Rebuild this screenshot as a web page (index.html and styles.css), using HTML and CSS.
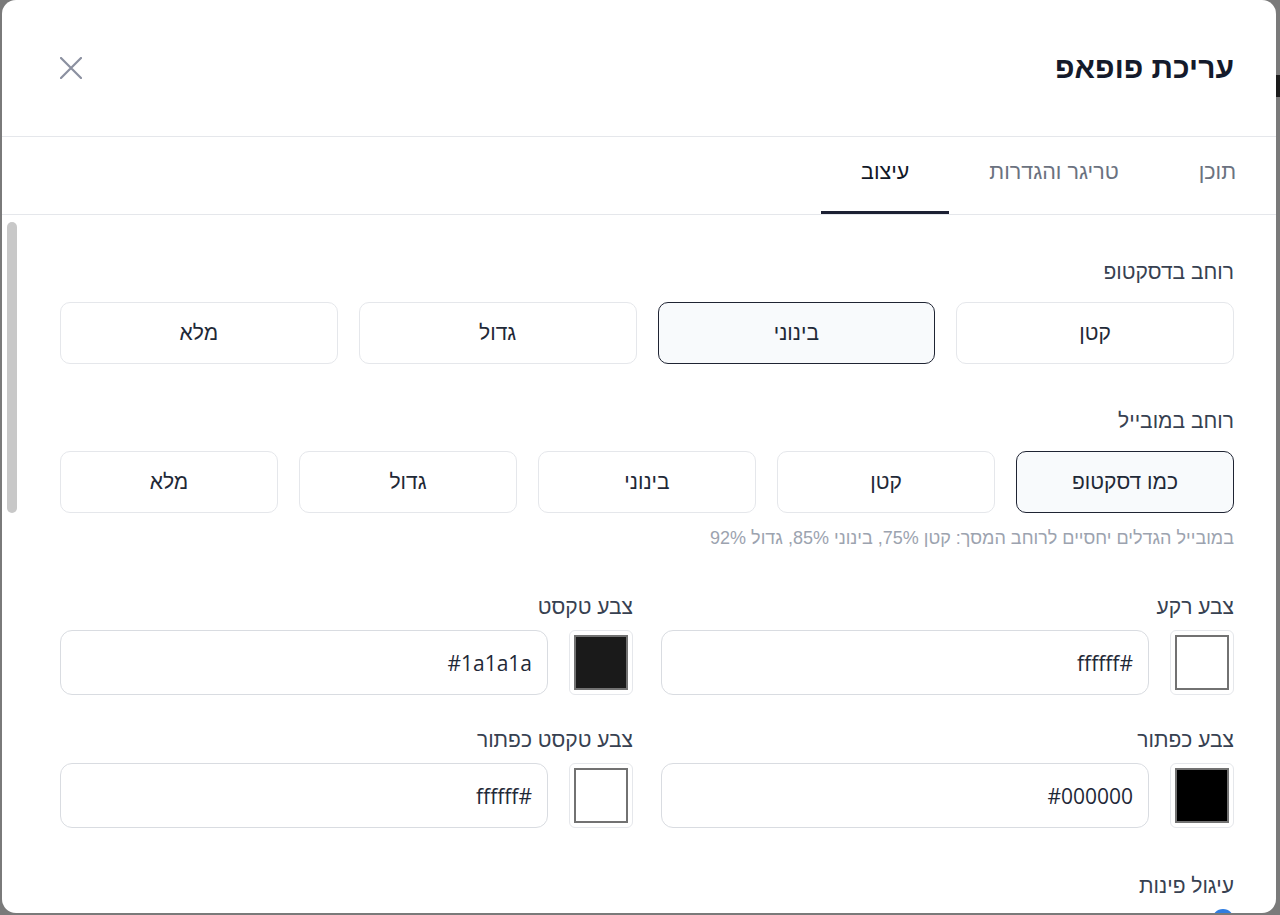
FILE: index.html
```html
<!DOCTYPE html>
<html lang="he" dir="rtl">
<head>
<meta charset="utf-8">
<title>עריכת פופאפ</title>
<link rel="stylesheet" href="styles.css">
</head>
<body>
<div class="modal">
  <div class="header">
    <h2 class="title">עריכת פופאפ</h2>
    <button class="close" aria-label="סגור">
      <svg width="22" height="22" viewBox="0 0 22 22"><path d="M1 1 L21 21 M21 1 L1 21" stroke="#8b90a0" stroke-width="2.2" stroke-linecap="round" fill="none"/></svg>
    </button>
  </div>
  <div class="tabs">
    <div class="tab">תוכן</div>
    <div class="tab">טריגר והגדרות</div>
    <div class="tab active">עיצוב</div>
  </div>
  <div class="content">
    <div class="label first">רוחב בדסקטופ</div>
    <div class="options four">
      <div class="opt">קטן</div>
      <div class="opt selected">בינוני</div>
      <div class="opt">גדול</div>
      <div class="opt">מלא</div>
    </div>
    <div class="label">רוחב במובייל</div>
    <div class="options five">
      <div class="opt selected">כמו דסקטופ</div>
      <div class="opt">קטן</div>
      <div class="opt">בינוני</div>
      <div class="opt">גדול</div>
      <div class="opt">מלא</div>
    </div>
    <div class="hint">במובייל הגדלים יחסיים לרוחב המסך: קטן 75%, בינוני 85%, גדול 92%</div>
    <div class="colors top">
      <div class="field">
        <div class="clabel">צבע רקע</div>
        <div class="crow">
          <div class="swatch"><span class="chip chip-white"></span></div>
          <div class="hex">#ffffff</div>
        </div>
      </div>
      <div class="field">
        <div class="clabel">צבע טקסט</div>
        <div class="crow">
          <div class="swatch"><span class="chip chip-dark"></span></div>
          <div class="hex">#1a1a1a</div>
        </div>
      </div>
    </div>
    <div class="colors second">
      <div class="field">
        <div class="clabel">צבע כפתור</div>
        <div class="crow">
          <div class="swatch"><span class="chip chip-black"></span></div>
          <div class="hex">#000000</div>
        </div>
      </div>
      <div class="field">
        <div class="clabel">צבע טקסט כפתור</div>
        <div class="crow">
          <div class="swatch"><span class="chip chip-white"></span></div>
          <div class="hex">#ffffff</div>
        </div>
      </div>
    </div>
    <div class="label radius">עיגול פינות</div>
    <div class="slider"><span class="thumb"></span></div>
  </div>
  <div class="scroll-thumb"></div>
</div>
</body>
</html>
```

FILE: styles.css
```css
* { box-sizing: border-box; }
html, body { margin: 0; padding: 0; }
body {
  width: 1280px;
  height: 915px;
  overflow: hidden;
  background-color: #7a7a7a;
  background-image: linear-gradient(#1b1b1b, #1b1b1b);
  background-size: 8px 22px;
  background-position: right 0 top 75px;
  background-repeat: no-repeat;
  font-family: "Liberation Sans", "Open Sans", sans-serif;
  color: #1f2937;
}
.modal {
  position: relative;
  margin: 0 4px 0 2px;
  width: 1274px;
  height: 913px;
  background: #fff;
  border-radius: 14px;
  overflow: hidden;
  display: flex;
  flex-direction: column;
  direction: rtl;
}
.header {
  height: 137px;
  flex: none;
  display: flex;
  align-items: center;
  justify-content: space-between;
  padding: 0 42px 0 58px;
  border-bottom: 1px solid #e5e7eb;
}
.title {
  margin: 0;
  font-size: 30px;
  font-weight: 700;
  color: #141a2b;
  line-height: 1;
}
.close {
  border: 0;
  background: none;
  padding: 0;
  width: 22px;
  height: 22px;
  display: flex;
  cursor: pointer;
}
.tabs {
  height: 78px;
  flex: none;
  display: flex;
  border-bottom: 1px solid #e5e7eb;
}
.tab {
  height: 77px;
  padding: 0 40px 4px;
  display: flex;
  align-items: center;
  font-size: 21.5px;
  color: #6b7280;
  border-bottom: 3px solid transparent;
}
.tab.active {
  color: #111827;
  border-bottom-color: #1c2033;
}
.content {
  flex: 1;
  padding: 0 42px 0 58px;
}
.label {
  font-size: 21px;
  line-height: 26px;
  color: #374151;
  margin-top: 44px;
  margin-bottom: 17px;
}
.options {
  display: grid;
  gap: 21px;
}
.options.four { grid-template-columns: repeat(4, 1fr); }
.options.five { grid-template-columns: repeat(5, 1fr); }
.opt {
  height: 62px;
  border: 1px solid #e5e7eb;
  border-radius: 10px;
  display: flex;
  align-items: center;
  justify-content: center;
  font-size: 21px;
  color: #1f2937;
  background: #fff;
}
.opt.selected {
  border: 1.5px solid #1f2433;
  background: #f8fafc;
}
.hint {
  margin-top: 15px;
  font-size: 18px;
  line-height: 20px;
  color: #9ca3af;
}
.colors {
  display: grid;
  grid-template-columns: 1fr 1fr;
  gap: 28px;
}
.colors.top { margin-top: 46px; }
.colors.second { margin-top: 32px; }
.clabel {
  font-size: 21px;
  line-height: 26px;
  color: #374151;
  margin-bottom: 10px;
}
.crow {
  display: flex;
  gap: 21px;
  height: 65px;
}
.swatch {
  width: 64px;
  flex: none;
  border: 1px solid #e5e7eb;
  border-radius: 6px;
  padding: 4px;
  display: flex;
}
.chip {
  flex: 1;
  border: 2px solid #727272;
}
.chip-white { background: #fff; }
.chip-dark { background: #1a1a1a; }
.chip-black { background: #000; }
.hex {
  flex: 1;
  border: 1.5px solid #d9dce1;
  border-radius: 12px;
  display: flex;
  align-items: center;
  padding: 0 15px;
  font-family: "Open Sans", sans-serif;
  font-size: 21px;
  color: #1f2937;
}
.label.radius {
  margin-top: 45px;
  margin-bottom: 10px;
}
.slider {
  height: 24px;
  display: flex;
}
.thumb {
  width: 22px;
  height: 22px;
  border-radius: 50%;
  background: #2f7de1;
}
.scroll-thumb {
  position: absolute;
  left: 5px;
  top: 222px;
  width: 10px;
  height: 291px;
  border-radius: 5px;
  background: #c8c8c8;
}
```
